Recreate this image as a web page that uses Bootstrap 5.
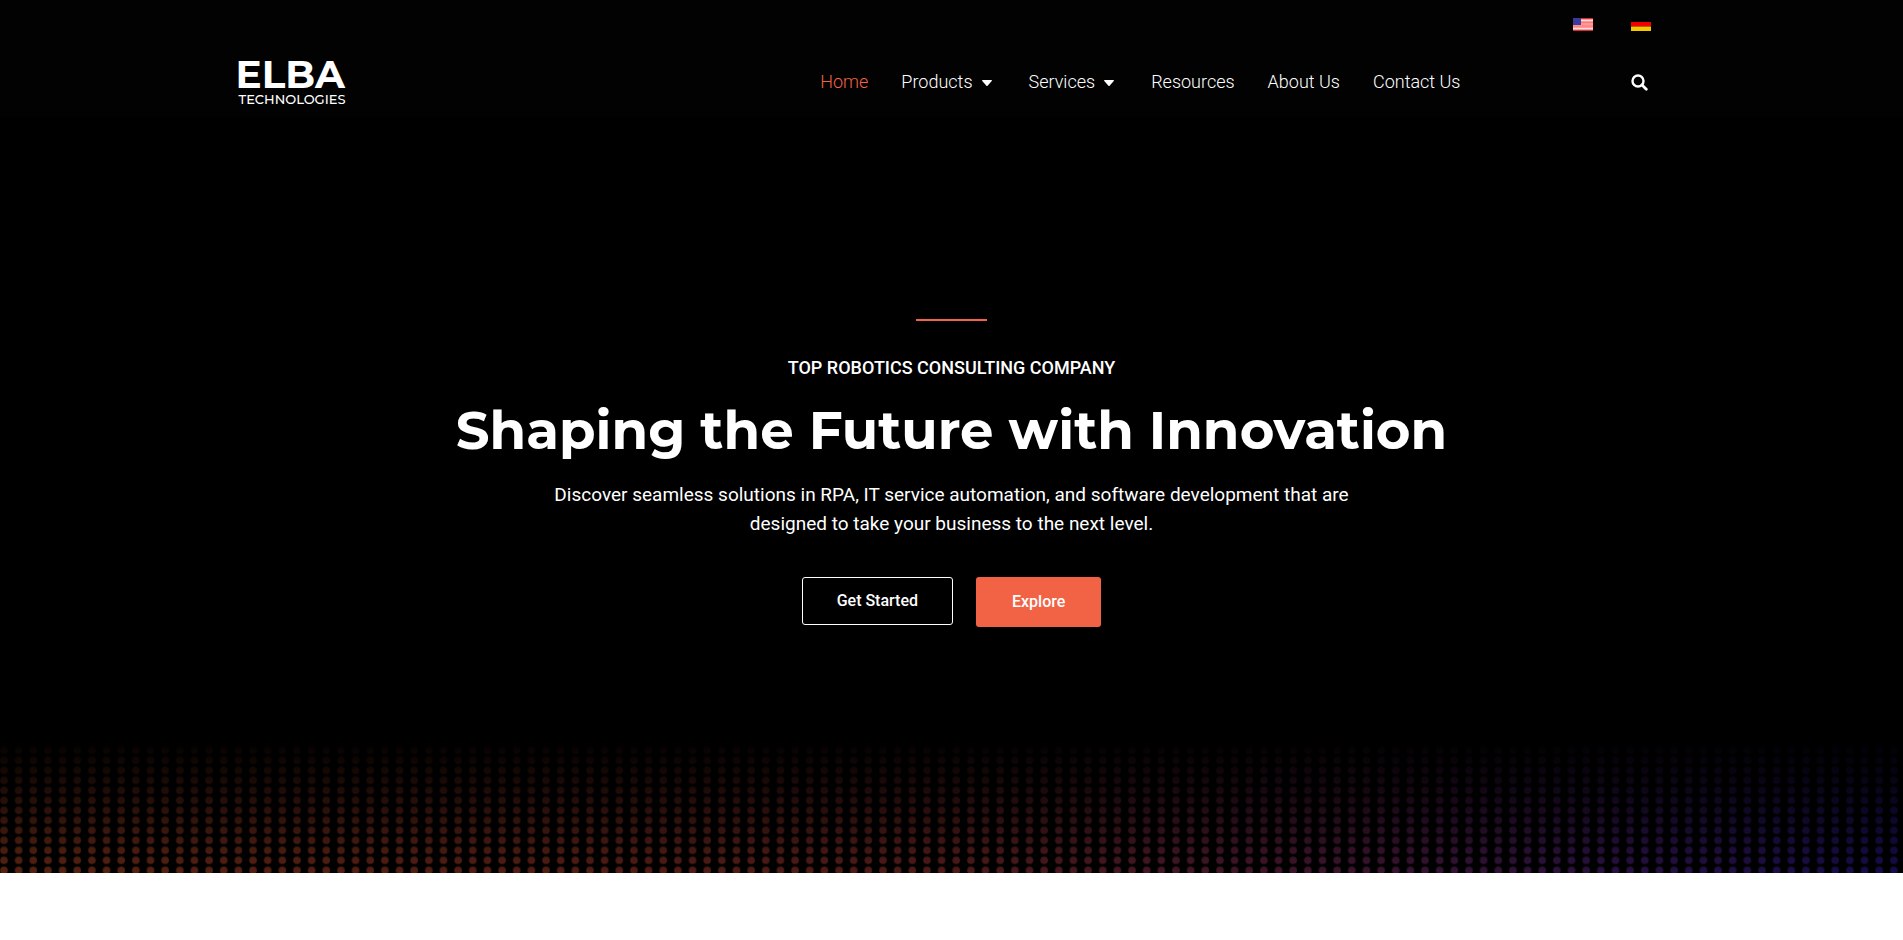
<!DOCTYPE html>
<html lang="en">
<head>
<meta charset="utf-8">
<meta name="viewport" content="width=device-width, initial-scale=1">
<title>ELBA Technologies</title>
<link href="https://cdn.jsdelivr.net/npm/bootstrap@5.3.0/dist/css/bootstrap.min.css" rel="stylesheet">
<style>
  :root { --elba-coral: #f26345; }
  body { font-family: Roboto, "Liberation Sans", sans-serif; background: #fff; }
  .shell { max-width: 1450px; }
  .site-header { background: #020202; }
  .lang-bar { padding: 17px 14px 0 0; gap: 38px; height: 48px; }
  .lang-bar svg { width: 20px; height: 14px; display: block; }
  .main-bar { height: 69px; }
  .logo { color: #fff; text-decoration: none; font-family: Montserrat, Inter, "Liberation Sans", sans-serif; }
  .logo-name { font-size: 39px; line-height: 32px; font-weight: 700; margin-left: -3px; padding-bottom: 2px; }
  .logo-sub { font-size: 13px; line-height: 15px; font-weight: 500; }
  .main-menu { gap: 33px; margin-right: 170px; padding-bottom: 2px; }
  .main-menu .nav-link { padding: 0; color: #fff; font-size: 18px; font-weight: 300; line-height: 24px; }
  .main-menu .nav-link.active { color: var(--elba-coral); }
  .main-menu .has-menu { padding-right: 4px; }
  .caret { width: 10px; height: 6px; margin: 2px 0 0 9px; }
  .search-btn { padding: 0; border: 0; background: none; margin-right: 17px; line-height: 0; }
  .hero { background: #000; color: #fff; padding-top: 202px; }
  .hero-line { width: 71px; height: 2px; background: var(--elba-coral); margin-bottom: 35px; }
  .eyebrow { font-size: 18px; line-height: 24px; font-weight: 500; margin-bottom: 16px; }
  .hero-title { font-family: Montserrat, Inter, "Liberation Sans", sans-serif; font-size: 53px; line-height: 68px; font-weight: 700; margin-bottom: 16px; }
  .hero-text { font-size: 19px; line-height: 29px; max-width: 840px; margin-bottom: 39px; }
  .hero-actions { gap: 23px; margin-bottom: 116px; }
  .hero .btn { font-size: 16px; line-height: 16px; font-weight: 500; border-radius: 3px; color: #fff; }
  .hero .btn-line { border: 1px solid #fff; padding: 15px 34px; }
  .hero .btn-fill { background: var(--elba-coral); border: 0; padding: 17px 36px; }
  .dots { display: block; width: 100%; height: 130px; }
</style>
</head>
<body>
<header class="site-header">
  <div class="container-fluid shell">
    <div class="lang-bar d-flex justify-content-end">
      <a href="#" aria-label="English"><svg viewBox="0 0 20 14"><rect y="1" width="20" height="13" fill="#f99"/><path d="M0 1.5h20M0 13.5h20" stroke="#d2302e"/><path d="M0 3.5h20M0 11.5h20" stroke="#fde0e0"/><path d="M0 5.5h20M0 9h20" stroke="#ff7777"/><rect y="1" width="8" height="7" fill="#3a3a9c"/></svg></a>
      <a href="#" aria-label="Deutsch"><svg viewBox="0 0 20 14"><rect y="1" width="20" height="4" fill="#000"/><rect y="5" width="20" height="4.500" fill="#f00000"/><rect y="9.500" width="20" height="4.500" fill="#f5c800"/></svg></a>
    </div>
    <nav class="main-bar navbar p-0 flex-nowrap align-items-center">
      <a href="#" class="logo d-flex flex-column">
        <span class="logo-name">ELBA</span>
        <span class="logo-sub">TECHNOLOGIES</span>
      </a>
      <ul class="main-menu nav flex-nowrap ms-auto">
        <li><a class="nav-link active" href="#">Home</a></li>
        <li><a class="nav-link has-menu d-flex align-items-center" href="#">Products<svg class="caret" viewBox="0 0 10 6"><path d="M0 .8Q0 0 .8 0H9.200Q10 0 10 .8L5.600 5.700Q5 6.200 4.400 5.700z" fill="#fff"/></svg></a></li>
        <li><a class="nav-link has-menu d-flex align-items-center" href="#">Services<svg class="caret" viewBox="0 0 10 6"><path d="M0 .8Q0 0 .8 0H9.200Q10 0 10 .8L5.600 5.700Q5 6.200 4.400 5.700z" fill="#fff"/></svg></a></li>
        <li><a class="nav-link" href="#">Resources</a></li>
        <li><a class="nav-link" href="#">About Us</a></li>
        <li><a class="nav-link" href="#">Contact Us</a></li>
      </ul>
      <button class="search-btn" type="button" aria-label="Search"><svg width="17" height="17" viewBox="0 0 17 17" fill="none" stroke="#fff"><circle cx="7" cy="7" r="5.500" stroke-width="2.400"/><path d="M11 11l4.300 4.300" stroke-width="2.800" stroke-linecap="round"/></svg></button>
    </nav>
  </div>
</header>
<main class="hero">
  <div class="container-fluid shell d-flex flex-column align-items-center text-center">
    <div class="hero-line"></div>
    <p class="eyebrow text-uppercase">Top Robotics Consulting Company</p>
    <h1 class="hero-title">Shaping the Future with Innovation</h1>
    <p class="hero-text">Discover seamless solutions in RPA, IT service automation, and software development that are designed to take your business to the next level.</p>
    <div class="hero-actions d-flex align-items-start">
      <button class="btn btn-line" type="button">Get Started</button>
      <button class="btn btn-fill" type="button">Explore</button>
    </div>
  </div>
  <svg class="dots" aria-hidden="true">
    <defs>
      <pattern id="dotGrid" y="2.300" width="14.650" height="10" patternUnits="userSpaceOnUse"><circle cx="4" cy="5" r="3.800" fill="#fff"/></pattern>
      <mask id="dotMask"><rect width="100%" height="100%" fill="url(#dotGrid)"/></mask>
      <linearGradient id="hue"><stop offset="0" stop-color="#562210"/><stop offset=".3" stop-color="#521d13"/><stop offset=".5" stop-color="#4e1a18"/><stop offset=".72" stop-color="#3a132e"/><stop offset=".85" stop-color="#281040"/><stop offset="1" stop-color="#140c4a"/></linearGradient>
      <linearGradient id="fade" x2="0" y2="1"><stop offset="0" stop-color="#000" stop-opacity=".94"/><stop offset=".4" stop-color="#000" stop-opacity=".6"/><stop offset="1" stop-color="#000" stop-opacity="0"/></linearGradient>
    </defs>
    <rect width="100%" height="100%" fill="url(#hue)" mask="url(#dotMask)"/>
    <rect width="100%" height="100%" fill="url(#fade)"/>
  </svg>
</main>
<script src="https://cdn.jsdelivr.net/npm/bootstrap@5.3.0/dist/js/bootstrap.bundle.min.js"></script>
</body>
</html>
